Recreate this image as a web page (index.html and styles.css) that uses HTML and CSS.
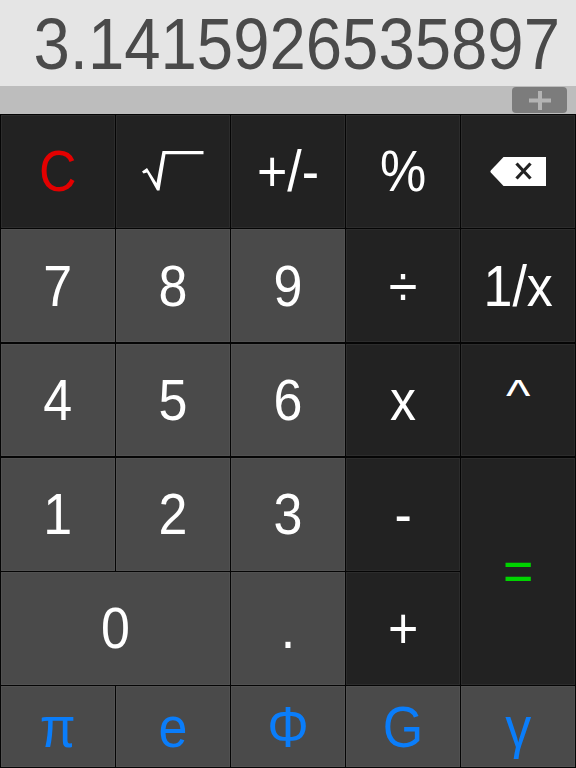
FILE: index.html
```html
<!DOCTYPE html>
<html lang="en">
<head>
<meta charset="utf-8">
<title>Calculator</title>
<link rel="stylesheet" href="styles.css">
</head>
<body>
<main class="calc">
  <div class="display"><span class="display-text">3.1415926535897</span></div>
  <div class="memory-bar">
    <div class="memory-add">
      <svg class="memory-icon" viewBox="0 0 22 19" aria-hidden="true"><path d="M0 7.500h22v4H0zM9 0h4v19H9z"/></svg>
    </div>
  </div>
  <div class="keypad">
    <div class="key dark red"><span class="label">C</span></div>
    <div class="key dark">
      <svg class="sqrt" viewBox="0 0 62 42" aria-hidden="true"><path fill="#fff" d="M0 21.500 5 18 14.500 33 20.500 1H61.500V4.200H23.500L17.500 40.500H15L5 22.500 1.500 23.500Z"/></svg>
    </div>
    <div class="key dark"><span class="label">+/-</span></div>
    <div class="key dark"><span class="label">%</span></div>
    <div class="key dark">
      <svg class="backspace" viewBox="0 0 56 29" aria-hidden="true"><path fill="#fff" d="M13.500 0H56V29H13.500L.8 15.500Q0 14.500 .8 13.500Z"/><path d="M26.500 6.500 40.500 21.500M40.500 6.500 26.500 21.500" fill="none" stroke="#222" stroke-width="3.200"/></svg>
    </div>
    <div class="key light"><span class="label">7</span></div>
    <div class="key light"><span class="label">8</span></div>
    <div class="key light"><span class="label">9</span></div>
    <div class="key dark"><span class="label">÷</span></div>
    <div class="key dark"><span class="label">1/x</span></div>
    <div class="key light"><span class="label">4</span></div>
    <div class="key light"><span class="label">5</span></div>
    <div class="key light"><span class="label">6</span></div>
    <div class="key dark"><span class="label">x</span></div>
    <div class="key dark"><span class="label caret">^</span></div>
    <div class="key light"><span class="label">1</span></div>
    <div class="key light"><span class="label">2</span></div>
    <div class="key light"><span class="label">3</span></div>
    <div class="key dark"><span class="label">-</span></div>
    <div class="key dark tall green"><span class="label">=</span></div>
    <div class="key light wide"><span class="label">0</span></div>
    <div class="key light"><span class="label">.</span></div>
    <div class="key dark"><span class="label">+</span></div>
    <div class="key light blue"><span class="label">π</span></div>
    <div class="key light blue"><span class="label">e</span></div>
    <div class="key light blue"><span class="label">Φ</span></div>
    <div class="key light blue"><span class="label">G</span></div>
    <div class="key light blue"><span class="label">γ</span></div>
  </div>
</main>
</body>
</html>
```
FILE: styles.css
```css
* { box-sizing: border-box; }
html, body { margin: 0; padding: 0; height: 100%; overflow: hidden; }
body { background: #000; font-family: "Liberation Sans", Arial, sans-serif; }
.calc { width: 576px; height: 768px; display: flex; flex-direction: column; }
.display {
  height: 86px; background: #e5e5e5; color: #4a4a4a;
  display: flex; align-items: center; justify-content: flex-end;
  padding: 2px 16px 0 0; overflow: hidden;
}
.display-text { font-size: 65.3px; display: inline-block; transform: scaleY(1.1); white-space: nowrap; }
.memory-bar {
  height: 28px; background: #bdbdbd;
  display: flex; justify-content: flex-end; align-items: flex-start;
  padding: 1px 9px 0 0;
}
.memory-add {
  width: 55px; height: 26px; background: #7c7c7c; border-radius: 4px;
  display: flex; align-items: center; justify-content: center;
}
.memory-icon { width: 22px; height: 19px; fill: #b4b4b4; }
.keypad {
  flex: 1; background: #050505; padding: 1px;
  display: grid; grid-template-columns: repeat(5, 1fr);
  grid-template-rows: repeat(5, 112.75px) 1fr;
  gap: 1.5px;
}
.key {
  display: flex; align-items: center; justify-content: center;
  color: #fff; font-size: 52px; border: 1px solid #2c2c2c;
}
.label { display: inline-block; transform: scaleY(1.1); line-height: 1; }
.dark { background: #222; }
.light { background: #4a4a4a; border-color: #515151; }
.red { color: #e30000; }
.green { color: #00d400; }
.blue { color: #0a7dfa; }
.wide { grid-column: span 2; }
.tall { grid-row: span 2; }
.label.caret { transform: scaleY(.85); position: relative; top: -4px; }
.sqrt { width: 62px; height: 42px; }
.backspace { width: 56px; height: 29px; }
```
